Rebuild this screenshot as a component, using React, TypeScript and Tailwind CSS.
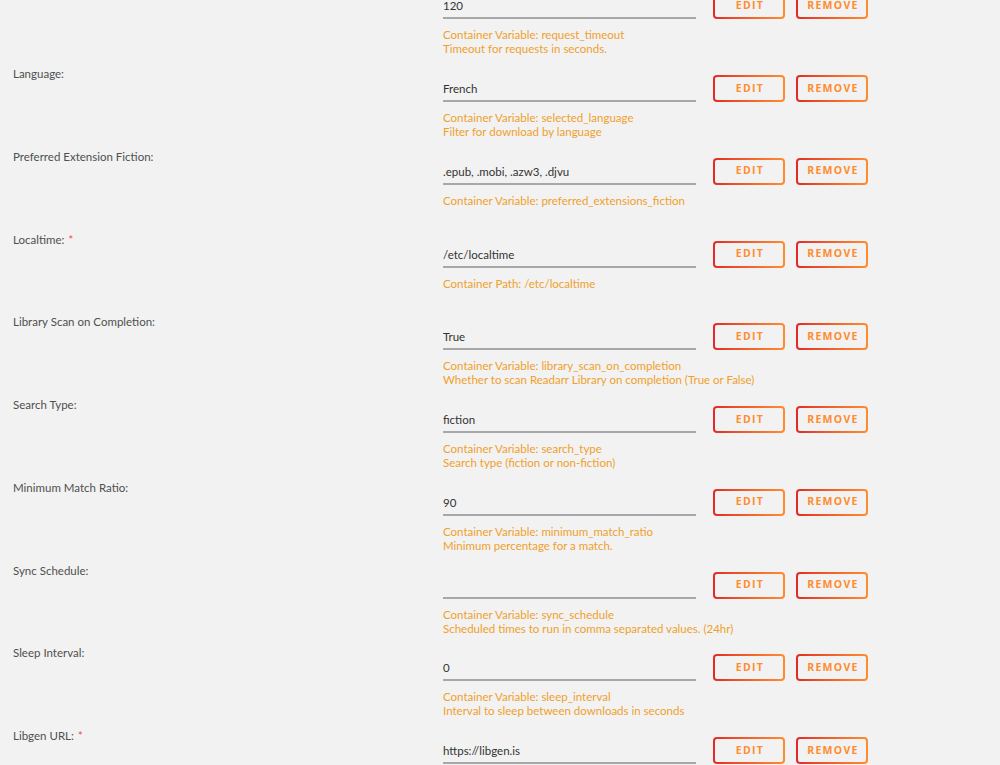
import React from "react";

type Row = {
    label: string;
    value: string;
    kind?: "Variable" | "Path";
    target: string;
    desc?: string;
    required?: boolean;
};

const rows: Row[] = [
    { label: "Request Timeout:", value: "120", target: "request_timeout", desc: "Timeout for requests in seconds." },
    { label: "Language:", value: "French", target: "selected_language", desc: "Filter for download by language" },
    { label: "Preferred Extension Fiction:", value: ".epub, .mobi, .azw3, .djvu", target: "preferred_extensions_fiction" },
    { label: "Localtime:", value: "/etc/localtime", kind: "Path", target: "/etc/localtime", required: true },
    { label: "Library Scan on Completion:", value: "True", target: "library_scan_on_completion", desc: "Whether to scan Readarr Library on completion (True or False)" },
    { label: "Search Type:", value: "fiction", target: "search_type", desc: "Search type (fiction or non-fiction)" },
    { label: "Minimum Match Ratio:", value: "90", target: "minimum_match_ratio", desc: "Minimum percentage for a match." },
    { label: "Sync Schedule:", value: "", target: "sync_schedule", desc: "Scheduled times to run in comma separated values. (24hr)" },
    { label: "Sleep Interval:", value: "0", target: "sleep_interval", desc: "Interval to sleep between downloads in seconds" },
    { label: "Libgen URL:", value: "https://libgen.is", target: "libgen_url", required: true, desc: "URL of the Libgen mirror to use" },
];

const GradientButton = ({ children }: { children: React.ReactNode }) => (
    <div className="w-[72px] h-[27px] rounded-[4px] p-[2px] bg-linear-to-r from-[#e22828] to-[#ff8c2f]">
        <div className="w-full h-full rounded-[2px] bg-[#f2f2f2] flex items-center justify-center font-['Open_Sans',sans-serif] text-[10.5px] font-bold tracking-[1.3px] text-[#ff8c2f] pl-[2px]">
            {children}
        </div>
    </div>
);

const App = () => {
    return (
        <div className="w-[1000px] h-[765px] overflow-hidden bg-[#f2f2f2] font-['Lato',sans-serif] text-[11.5px]">
            <div className="-mt-[15.75px]">
                {rows.map(row => (
                    <div key={row.target} className="flex h-[82.75px]">
                        <div className="w-[443px] pl-[13px] leading-[14px] text-[#4f4f4f]">
                            {row.label}
                            {row.required && <span className="text-[#ff4040] text-[11px] align-top ml-[4px]">*</span>}
                        </div>
                        <div className="flex flex-col">
                            <div className="flex items-start">
                                <div className="mt-[12px] w-[253px] h-[23px] leading-[20px] border-b-2 border-[#a8a8a8] text-[#333]">
                                    {row.value}
                                </div>
                                <div className="mt-[8px] ml-[17px] flex gap-[11px]">
                                    <GradientButton>EDIT</GradientButton>
                                    <GradientButton>REMOVE</GradientButton>
                                </div>
                            </div>
                            <div className="mt-[9px] leading-[14px] text-[#f0a02c]">
                                <div>Container {row.kind ?? "Variable"}: {row.target}</div>
                                {row.desc && <div>{row.desc}</div>}
                            </div>
                        </div>
                    </div>
                ))}
            </div>
        </div>
    );
};

export default App;
